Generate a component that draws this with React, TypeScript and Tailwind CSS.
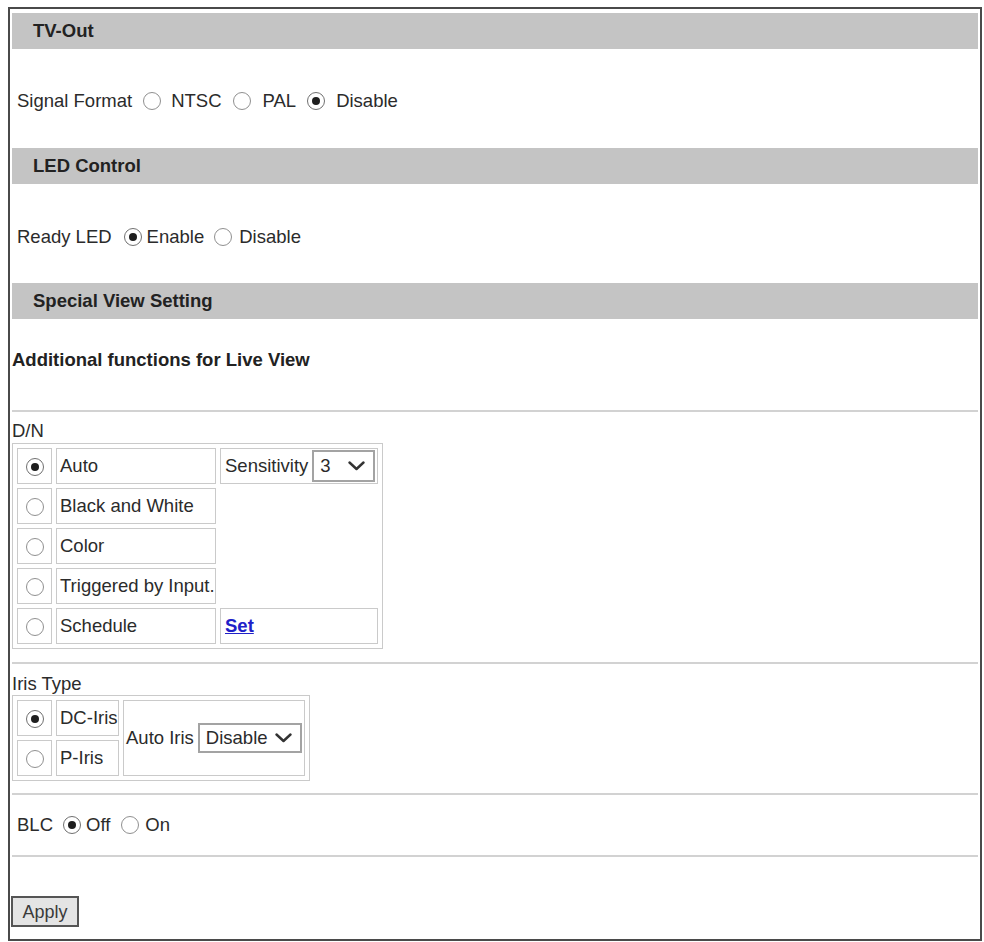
import React from 'react';

const Radio: React.FC<{ checked?: boolean }> = ({ checked }) => (
  <span
    className={`flex w-[18px] h-[18px] shrink-0 items-center justify-center rounded-full border-[1.5px] bg-white ${
      checked ? 'border-[#707070]' : 'border-[#909090]'
    }`}
  >
    {checked && <span className="w-[8px] h-[8px] rounded-full bg-[#1e1e1e]" />}
  </span>
);

const Chevron: React.FC = () => (
  <svg width="17" height="10" viewBox="0 0 17 10" className="shrink-0">
    <path d="M1.5 1.5 L8.5 8 L15.5 1.5" fill="none" stroke="#333" strokeWidth="2.4" strokeLinecap="round" strokeLinejoin="round" />
  </svg>
);

const FakeSelect: React.FC<{ value: string; className: string }> = ({ value, className }) => (
  <span className={`inline-flex shrink-0 items-center justify-between border-2 border-[#a3a3a3] bg-white pl-[6px] pr-[8px] ${className}`}>
    <span>{value}</span>
    <Chevron />
  </span>
);

const SectionHeader: React.FC<{ title: string }> = ({ title }) => (
  <div className="h-[36px] bg-[#c4c4c4] flex items-center pl-[21px] font-bold text-[#222]">{title}</div>
);

const cell = 'border border-[#cacaca] p-0';

export default function App() {
  return (
    <div className="bg-white w-[984px] min-h-[942px] pt-[7px] text-[18.5px] leading-[20px] text-[#2b2b2b]" style={{ fontFamily: '"Liberation Sans", Arial, sans-serif' }}>
      <div className="ml-[8px] w-[974px] h-[934px] border-2 border-[#4a4a4a] px-[2px] pt-[4px]">
        <SectionHeader title="TV-Out" />
        <div className="h-[99px] flex items-center pl-[5px] pt-[5px]">
          <span>Signal Format</span>
          <span className="ml-[11px] flex"><Radio /></span>
          <span className="ml-[10px]">NTSC</span>
          <span className="ml-[11px] flex"><Radio /></span>
          <span className="ml-[12px]">PAL</span>
          <span className="ml-[11px] flex"><Radio checked /></span>
          <span className="ml-[11px]">Disable</span>
        </div>

        <SectionHeader title="LED Control" />
        <div className="h-[99px] flex items-center pl-[5px] pt-[6px]">
          <span>Ready LED</span>
          <span className="ml-[12px] flex"><Radio checked /></span>
          <span className="ml-[5px]">Enable</span>
          <span className="ml-[10px] flex"><Radio /></span>
          <span className="ml-[7px]">Disable</span>
        </div>

        <SectionHeader title="Special View Setting" />
        <div className="h-[91px] flex items-center pb-[9px] font-bold text-[#222]">Additional functions for Live View</div>

        <div className="border-t-2 border-[#d2d2d2] pt-[9px] pb-[13px]">
          <div>D/N</div>
          <table className="mt-[2px] border border-[#cacaca] border-separate border-spacing-1">
            <tbody>
              {[
                ['Auto', true],
                ['Black and White', false],
                ['Color', false],
                ['Triggered by Input.', false],
                ['Schedule', false],
              ].map(([label, checked], i) => (
                <tr key={i} className="h-[36px]">
                  <td className={`${cell} w-[35px] align-middle`}>
                    <span className="flex justify-center pt-[1px]"><Radio checked={checked as boolean} /></span>
                  </td>
                  <td className={`${cell} w-[160px] pl-[3px] align-middle whitespace-nowrap`}>{label as string}</td>
                  {i === 0 && (
                    <td className={`${cell} w-[158px] pl-[4px] align-middle`}>
                      <div className="flex items-center whitespace-nowrap">
                        <span>Sensitivity</span>
                        <FakeSelect value="3" className="ml-[4px] w-[63px] h-[32px]" />
                      </div>
                    </td>
                  )}
                  {i === 4 && (
                    <td className={`${cell} w-[158px] pl-[4px] align-middle`}>
                      <a href="#" className="font-bold text-[#2020c8] underline">Set</a>
                    </td>
                  )}
                </tr>
              ))}
            </tbody>
          </table>
        </div>

        <div className="border-t-2 border-[#d2d2d2] pt-[10px] pb-[12px]">
          <div>Iris Type</div>
          <table className="mt-[1px] border border-[#cacaca] border-separate border-spacing-1">
            <tbody>
              <tr className="h-[36px]">
                <td className={`${cell} w-[35px] align-middle`}>
                  <span className="flex justify-center pt-[1px]"><Radio checked /></span>
                </td>
                <td className={`${cell} w-[63px] pl-[3px] align-middle whitespace-nowrap`}>DC-Iris</td>
                <td rowSpan={2} className={`${cell} w-[180px] pl-[2px] pr-[2px] align-middle`}>
                  <div className="flex items-center whitespace-nowrap">
                    <span>Auto Iris</span>
                    <FakeSelect value="Disable" className="ml-[4px] w-[104px] h-[30px]" />
                  </div>
                </td>
              </tr>
              <tr className="h-[36px]">
                <td className={`${cell} w-[35px] align-middle`}>
                  <span className="flex justify-center pt-[1px]"><Radio /></span>
                </td>
                <td className={`${cell} w-[63px] pl-[3px] align-middle whitespace-nowrap`}>P-Iris</td>
              </tr>
            </tbody>
          </table>
        </div>

        <div className="border-t-2 border-[#d2d2d2] h-[62px] flex items-center pl-[5px]">
          <span>BLC</span>
          <span className="ml-[10px] flex"><Radio checked /></span>
          <span className="ml-[5px]">Off</span>
          <span className="ml-[11px] flex"><Radio /></span>
          <span className="ml-[6px]">On</span>
        </div>

        <div className="border-t-2 border-[#d2d2d2] pt-[39px]">
          <button className="-ml-[1px] w-[68px] h-[31px] border-2 border-[#555] bg-[#e4e4e4] text-[#3a3a3a] text-[18px] flex items-center justify-center">
            Apply
          </button>
        </div>
      </div>
    </div>
  );
}
